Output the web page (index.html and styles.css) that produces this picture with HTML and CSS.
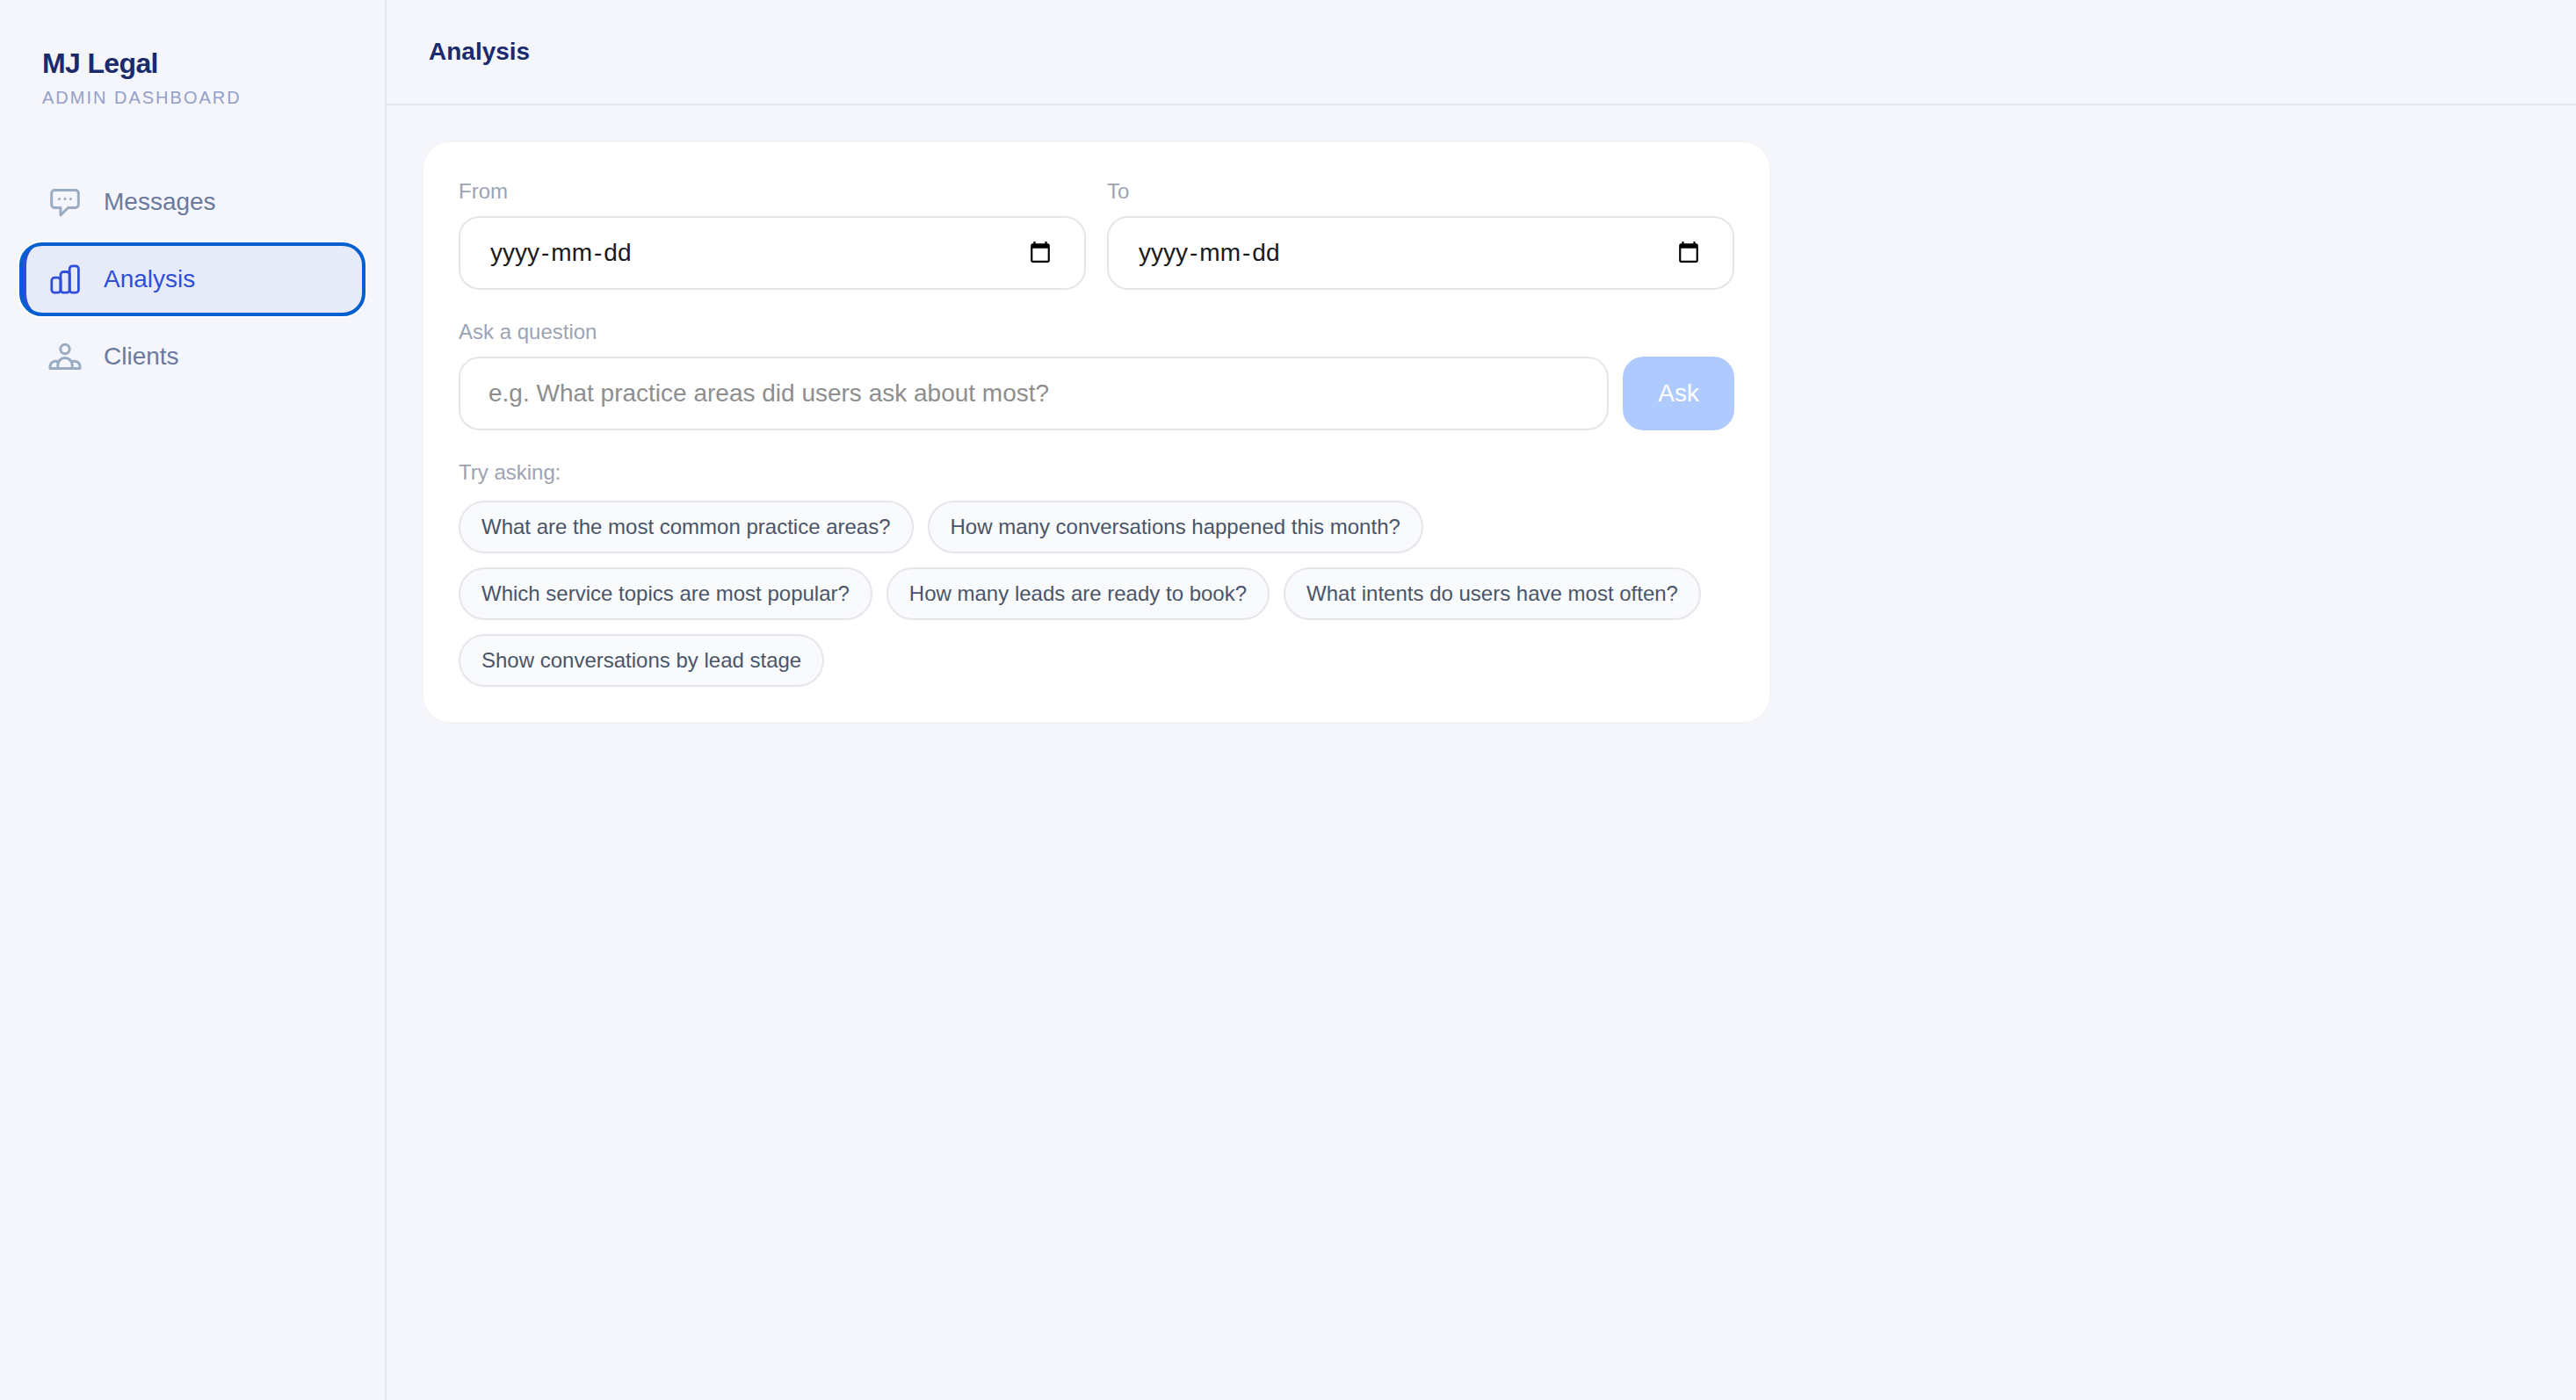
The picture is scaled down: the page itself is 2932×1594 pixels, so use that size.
FILE: index.html
```html
<!DOCTYPE html>
<html lang="en">
<head>
    <meta charset="UTF-8">
    <meta name="viewport" content="width=device-width, initial-scale=1.0">
    <title>MJ Legal - Analysis</title>
    <link rel="stylesheet" href="styles.css">
</head>
<body>
    <div class="layout">
        <!-- Sidebar -->
        <aside class="sidebar">
            <div class="brand">
                <h1 class="brand-name">MJ Legal</h1>
                <p class="brand-subtitle">ADMIN DASHBOARD</p>
            </div>

            <nav class="nav">
                <a class="nav-item" href="#">
                    <svg class="nav-icon" viewBox="0 0 40 40" fill="none" stroke="currentColor" stroke-width="3" stroke-linejoin="round" stroke-linecap="round">
                        <path d="M8 6.500h24a3.300 3.300 0 0 1 3.300 3.300v13.400a3.300 3.300 0 0 1-3.300 3.300h-8.500L15 35v-8.500H8a3.300 3.300 0 0 1-3.300-3.300V9.800A3.300 3.300 0 0 1 8 6.500z"/>
                        <g fill="currentColor" stroke="none">
                            <circle cx="13.500" cy="16.600" r="1.500"/>
                            <circle cx="20" cy="16.600" r="1.500"/>
                            <circle cx="26.500" cy="16.600" r="1.500"/>
                        </g>
                    </svg>
                    <span>Messages</span>
                </a>
                <a class="nav-item active" href="#">
                    <svg class="nav-icon" viewBox="0 0 40 40" fill="none" stroke="currentColor" stroke-width="2.800">
                        <rect x="4.800" y="18.200" width="10.200" height="17" rx="3.300"/>
                        <rect x="15" y="11.500" width="10.200" height="23.700" rx="3.300"/>
                        <rect x="25.200" y="4.800" width="10.200" height="30.400" rx="3.300"/>
                    </svg>
                    <span>Analysis</span>
                </a>
                <a class="nav-item" href="#">
                    <svg class="nav-icon" viewBox="0 0 40 40" fill="none" stroke="currentColor" stroke-width="3" stroke-linejoin="round">
                        <circle cx="20" cy="11.500" r="5.200"/>
                        <path d="M11.800 33.500v-3.800a8.200 8.200 0 0 1 16.400 0v3.800z"/>
                        <path d="M13 26.300C8 23.500 3 26.500 3 31.500v2h8.800M27 26.300C32 23.500 37 26.500 37 31.500v2h-8.800"/>
                    </svg>
                    <span>Clients</span>
                </a>
            </nav>
        </aside>

        <!-- Main Content -->
        <main class="main">
            <header class="header">
                <h2 class="page-title">Analysis</h2>
            </header>

            <section class="content">
                <div class="card">
                    <div class="date-row">
                        <div class="field">
                            <label class="label">From</label>
                            <div class="input date-input">
                                <div class="date-text"><span>yyyy</span><span>-</span><span>mm</span><span>-</span><span>dd</span></div>
                                <svg class="calendar-icon" viewBox="0 0 24 24"><path d="M20 3h-1V1h-2v2H7V1H5v2H4c-1.100 0-2 .9-2 2v16c0 1.100.9 2 2 2h16c1.100 0 2-.9 2-2V5c0-1.100-.9-2-2-2zm0 18H4V8h16v13z"/></svg>
                            </div>
                        </div>
                        <div class="field">
                            <label class="label">To</label>
                            <div class="input date-input">
                                <div class="date-text"><span>yyyy</span><span>-</span><span>mm</span><span>-</span><span>dd</span></div>
                                <svg class="calendar-icon" viewBox="0 0 24 24"><path d="M20 3h-1V1h-2v2H7V1H5v2H4c-1.100 0-2 .9-2 2v16c0 1.100.9 2 2 2h16c1.100 0 2-.9 2-2V5c0-1.100-.9-2-2-2zm0 18H4V8h16v13z"/></svg>
                            </div>
                        </div>
                    </div>

                    <div class="field">
                        <label class="label" for="question">Ask a question</label>
                        <div class="ask-row">
                            <input type="text" class="input question-input" id="question" placeholder="e.g. What practice areas did users ask about most?">
                            <button class="ask-button" disabled>Ask</button>
                        </div>
                    </div>

                    <div class="suggestions">
                        <p class="label">Try asking:</p>
                        <div class="chips">
                            <button class="chip">What are the most common practice areas?</button>
                            <button class="chip">How many conversations happened this month?</button>
                            <button class="chip">Which service topics are most popular?</button>
                            <button class="chip">How many leads are ready to book?</button>
                            <button class="chip">What intents do users have most often?</button>
                            <button class="chip">Show conversations by lead stage</button>
                        </div>
                    </div>
                </div>
            </section>
        </main>
    </div>
</body>
</html>
```
FILE: styles.css
```css
/* Global Styles */
* {
    box-sizing: border-box;
    margin: 0;
    padding: 0;
    font-family: "Liberation Sans", Arial, sans-serif;
}

body {
    background-color: #f4f6fb;
}

.layout {
    display: flex;
    min-height: 100vh;
}

/* Sidebar */
.sidebar {
    width: 440px;
    flex-shrink: 0;
    border-right: 2px solid #e2e8f0;
    padding: 52px 24px;
}

.brand {
    padding: 0 24px;
    margin-bottom: 64px;
}

.brand-name {
    font-size: 32px;
    line-height: 40px;
    letter-spacing: -0.02em;
    color: #1b2a6b;
}

.brand-subtitle {
    margin-top: 4px;
    font-size: 20px;
    line-height: 30px;
    letter-spacing: 0.1em;
    color: #94a0c8;
}

/* Navigation */
.nav {
    display: flex;
    flex-direction: column;
    gap: 8px;
}

.nav-item {
    display: flex;
    align-items: center;
    gap: 24px;
    height: 80px;
    padding: 0 24px;
    border-left: 6px solid transparent;
    border-radius: 24px;
    font-size: 28px;
    color: #6b7a9e;
    text-decoration: none;
}

.nav-icon {
    width: 40px;
    height: 40px;
    color: #9aacc2;
}

.nav-item.active {
    background-color: #e7ebf7;
    border-left-color: #2f4fdb;
    color: #2f4fdb;
    outline: 4px solid #0060d0;
    outline-offset: -2px;
    box-shadow: 0 0 0 4px #fff;
}

.nav-item.active .nav-icon {
    color: #2f4fdb;
}

/* Header */
.main {
    flex: 1;
}

.header {
    height: 120px;
    padding: 0 48px;
    display: flex;
    align-items: center;
    border-bottom: 2px solid #e2e8f0;
}

.page-title {
    font-size: 28px;
    line-height: 40px;
    color: #1b2a6b;
}

.content {
    padding: 40px;
}

/* Card */
.card {
    width: 1536px;
    padding: 40px;
    background-color: #fff;
    border: 2px solid #f3f4f6;
    border-radius: 32px;
    display: flex;
    flex-direction: column;
    gap: 32px;
}

.date-row {
    display: flex;
    gap: 24px;
}

.field {
    flex: 1;
    display: flex;
    flex-direction: column;
    gap: 12px;
}

.label {
    font-size: 24px;
    line-height: 32px;
    color: #9ca3b4;
}

.input {
    height: 84px;
    padding: 0 32px;
    background-color: #fff;
    border: 2px solid #e5e5eb;
    border-radius: 24px;
    font-size: 28px;
}

.date-input {
    display: flex;
    align-items: center;
    justify-content: space-between;
}

.date-text {
    color: #1a1a1a;
}

.date-text span {
    padding: 0 2px;
}

/* The separators take no padding of their own */
.date-text span:nth-child(even) {
    padding: 0;
}

.calendar-icon {
    width: 26px;
    height: 26px;
    margin: 0 5px 2px 0;
}

/* Question */
.ask-row {
    display: flex;
    gap: 16px;
}

.question-input {
    flex: 1;
}

.question-input::placeholder {
    color: #8e8e8e;
}

.ask-button {
    height: 84px;
    padding: 0 40px;
    border: none;
    border-radius: 24px;
    background-color: #afcaff;
    color: #fff;
    font-size: 28px;
}

/* Suggestions */
.suggestions {
    display: flex;
    flex-direction: column;
    gap: 16px;
}

.chips {
    display: flex;
    flex-wrap: wrap;
    gap: 16px;
}

.chip {
    padding: 12px 24px;
    border: 2px solid #e5e5eb;
    border-radius: 30px;
    background-color: #f9fafc;
    color: #4a5568;
    font-size: 24px;
    line-height: 32px;
}
```
